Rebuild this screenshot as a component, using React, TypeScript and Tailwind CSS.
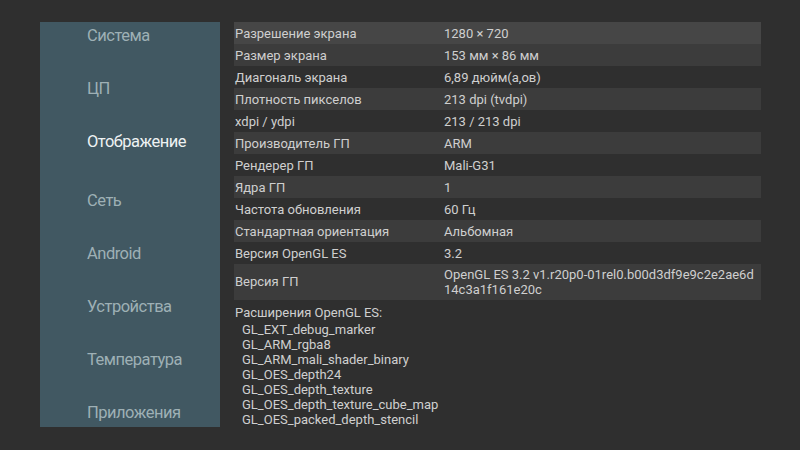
import React from 'react';

const menu = ['Система', 'ЦП', 'Отображение', 'Сеть', 'Android', 'Устройства', 'Температура', 'Приложения'];

const rows: [string, string][] = [
  ['Разрешение экрана', '1280 × 720'],
  ['Размер экрана', '153 мм × 86 мм'],
  ['Диагональ экрана', '6,89 дюйм(а,ов)'],
  ['Плотность пикселов', '213 dpi (tvdpi)'],
  ['xdpi / ydpi', '213 / 213 dpi'],
  ['Производитель ГП', 'ARM'],
  ['Рендерер ГП', 'Mali-G31'],
  ['Ядра ГП', '1'],
  ['Частота обновления', '60 Гц'],
  ['Стандартная ориентация', 'Альбомная'],
  ['Версия OpenGL ES', '3.2'],
];

const extensions = [
  'GL_EXT_debug_marker',
  'GL_ARM_rgba8',
  'GL_ARM_mali_shader_binary',
  'GL_OES_depth24',
  'GL_OES_depth_texture',
  'GL_OES_depth_texture_cube_map',
  'GL_OES_packed_depth_stencil',
];

const App = () => {
  return (
    <div className="w-[800px] h-[450px] overflow-hidden bg-[#2f2f2f] flex items-start pt-[22px] pl-[40px] gap-[14px] font-['Roboto',sans-serif]">
      {/* Sidebar */}
      <div className="w-[180px] h-[405px] shrink-0 overflow-hidden bg-[#415862] flex flex-col pl-[47px] pt-[4px]">
        {menu.map((m, i) => (
          <div
            key={m}
            className={
              i === 2
                ? "shrink-0 h-[59px] leading-[20px] text-[16.5px] tracking-[-0.5px] text-[#eef2f3]"
                : "shrink-0 h-[53px] leading-[20px] text-[16.5px] tracking-[-0.5px] text-[#9eb0b5]"
            }
          >
            {m}
          </div>
        ))}
      </div>

      {/* Info table */}
      <div className="w-[527px] shrink-0 flex flex-col text-[13px] text-[#cfcfcf]">
        {rows.map(([k, v], i) => (
          <div
            key={k}
            className={
              'flex h-[22px] items-center ' +
              (i === 0 ? 'bg-[#464646]' : i % 2 === 1 ? 'bg-[#3c3c3c]' : '')
            }
          >
            <div className="w-[210px] pl-[1px] pt-[1px]">{k}</div>
            <div className="flex-1 pt-[1px]">{v}</div>
          </div>
        ))}
        <div className="flex h-[36px] items-center bg-[#3c3c3c]">
          <div className="w-[210px] pl-[1px]">Версия ГП</div>
          <div className="flex-1 leading-[15px]">
            OpenGL ES 3.2 v1.r20p0-01rel0.b00d3df9e9c2e2ae6d
            <br />
            14c3a1f161e20c
          </div>
        </div>
        <div className="pt-[4px] pl-[1px] leading-[18px]">Расширения OpenGL ES:</div>
        <div className="pl-[8px] leading-[15px]">
          {extensions.map((e) => (
            <div key={e}>{e}</div>
          ))}
        </div>
      </div>
    </div>
  );
};

export default App;
